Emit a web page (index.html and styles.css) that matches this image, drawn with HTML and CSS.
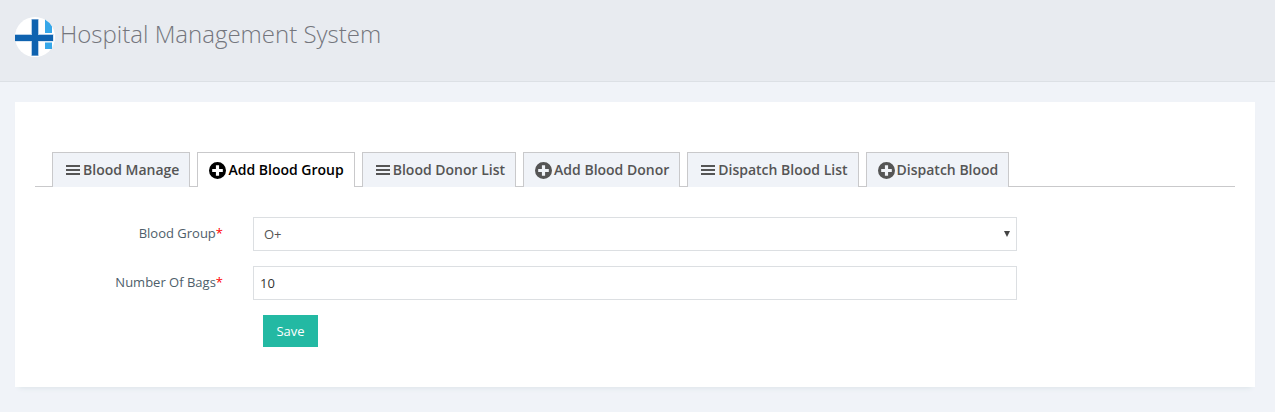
FILE: index.html
```html
<!DOCTYPE html>
<html lang="en">
<head>
<meta charset="utf-8">
<title>Hospital Management System</title>
<link rel="stylesheet" href="styles.css">
</head>
<body>
<svg class="sprite" aria-hidden="true">
  <symbol id="bars" viewBox="0 0 14 11"><path d="M0 1h14M0 5h14M0 9h14" stroke="currentColor" stroke-width="2"/></symbol>
  <symbol id="plus" viewBox="0 0 16 16"><path fill="currentColor" fill-rule="evenodd" d="M8 0a8 8 0 1 1 0 16A8 8 0 0 1 8 0ZM6.500 3v3.500H3v3h3.500V13h3V9.500H13v-3H9.500V3Z"/></symbol>
</svg>
<div class="page">
  <header class="header">
    <svg class="logo" viewBox="0 0 40 40" role="img" aria-label="Hospital logo">
      <circle cx="20" cy="20" r="20" fill="#fff"/>
      <path d="M30 2.500q5 3 7 7V16H30ZM30 25.500h7V32H30Z" fill="#36a7e9"/>
      <path d="M16 2h8v37h-8ZM0 17h38.500v7.500H0Z" fill="#b5cfe8"/>
      <path d="M17 2.500h6V38.500h-6ZM0 18h38v6H0Z" fill="#0f63b0"/>
    </svg>
    <h1 class="title">Hospital Management System</h1>
  </header>
  <main class="panel">
    <nav class="tabs">
      <a class="tab" href="#manage"><svg class="bars"><use href="#bars"/></svg>Blood Manage</a>
      <a class="tab active" href="#add-group" aria-current="page"><svg class="plus"><use href="#plus"/></svg>Add Blood Group</a>
      <a class="tab" href="#donors"><svg class="bars"><use href="#bars"/></svg>Blood Donor List</a>
      <a class="tab" href="#add-donor"><svg class="plus"><use href="#plus"/></svg>Add Blood Donor</a>
      <a class="tab" href="#dispatches"><svg class="bars"><use href="#bars"/></svg>Dispatch Blood List</a>
      <a class="tab" href="#dispatch"><svg class="plus"><use href="#plus"/></svg>Dispatch Blood</a>
    </nav>
    <form class="form">
      <label class="label" for="group">Blood Group<span class="required">*</span></label>
      <div class="select-wrap">
        <select class="control select" id="group"><option>O+</option></select>
        <svg class="arrow" viewBox="0 0 6 6" aria-hidden="true"><path d="M0 0h6L3 6Z" fill="#444"/></svg>
      </div>
      <label class="label" for="bags">Number Of Bags<span class="required">*</span></label>
      <input class="control" id="bags" type="text" value="10">
      <button class="save" type="button">Save</button>
    </form>
  </main>
</div>
</body>
</html>
```
FILE: styles.css
```css
* { box-sizing: border-box; }
body {
  margin: 0;
  background: #fff;
  color: #4e5e6a;
  font: 13px/20px "Open Sans", sans-serif;
}
.sprite { display: none; }
.page {
  min-height: 100vh;
  margin-right: 7px;
  padding-bottom: 25px;
  background: #f0f3f8;
}
.header {
  display: flex;
  align-items: flex-start;
  gap: 5px;
  padding: 17px 15px 24px;
  background: #e8ebf0;
  border-bottom: 1px solid #dce0e5;
}
.logo { width: 40px; height: 40px; flex: none; }
.title {
  margin: 0;
  color: #74767d;
  font-size: 24px;
  line-height: 34px;
  font-weight: 300;
}
.panel {
  margin: 20px 20px 0 15px;
  padding: 50px 20px 40px;
  background: #fff;
  box-shadow: 0 5px 5px -4px #dce4e8;
}
.tabs {
  display: flex;
  gap: 7px;
  padding-left: 17px;
  border-bottom: 1px solid #c9c9cb;
}
.tab {
  display: flex;
  align-items: center;
  height: 35px;
  margin-bottom: -1px;
  padding: 0 10px 0 13px;
  border: 1px solid #c9c9cb;
  border-bottom: 0;
  background: #f0f3f8;
  color: #555;
  font-size: 14px;
  font-weight: 600;
  text-decoration: none;
  white-space: nowrap;
}
.active { background: #fff; color: #000; }
.bars { width: 14px; height: 11px; margin-right: 3px; }
.plus { width: 17px; height: 17px; margin-left: -2px; margin-right: 2px; }
.form {
  display: grid;
  grid-template-columns: 188px minmax(0, 764px);
  column-gap: 30px;
  row-gap: 15px;
  padding-top: 30px;
}
.label { padding-top: 6px; text-align: right; }
.required { color: #f00; }
.select-wrap { position: relative; }
.control {
  display: block;
  width: 100%;
  height: 34px;
  padding: 0 6px;
  border: 1px solid #dcdfe2;
  border-radius: 0;
  background: #fff;
  color: #333;
  font: inherit;
}
.select { appearance: none; padding-left: 10px; color: #555; }
.arrow {
  position: absolute;
  top: 14px;
  right: 7px;
  width: 6px;
  height: 6px;
  pointer-events: none;
}
.save {
  grid-column: 2;
  justify-self: start;
  min-width: 55px;
  height: 32px;
  margin-left: 10px;
  padding: 0 13px;
  border: 0;
  background: #23b9a3;
  color: #fff;
  font: inherit;
}
```
